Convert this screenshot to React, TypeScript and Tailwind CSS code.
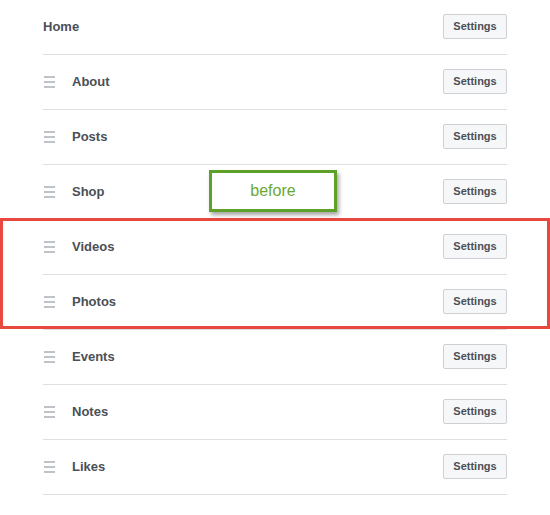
const tabs = ["About", "Posts", "Shop", "Videos", "Photos", "Events", "Notes", "Likes"];

function DragHandle() {
  return (
    <svg width="11" height="12" viewBox="0 0 11 12" className="shrink-0 mr-[17px]">
      <rect x="0" y="0" width="11" height="2" fill="#bec3c9" />
      <rect x="0" y="5" width="11" height="2" fill="#bec3c9" />
      <rect x="0" y="10" width="11" height="2" fill="#bec3c9" />
    </svg>
  );
}

function SettingsButton() {
  return (
    <button className="mb-px h-[25px] w-[64px] rounded-[2px] border border-[#ced0d4] bg-[#f6f7f9] text-[11px] font-bold text-[#4b4f56]">
      Settings
    </button>
  );
}

export default function App() {
  return (
    <div
      className="relative h-[515px] w-[550px] overflow-hidden bg-white"
      style={{ fontFamily: '"Liberation Sans", Arial, sans-serif' }}
    >
      <div className="ml-[43px] w-[464px]">
        <div className="flex h-[55px] items-center justify-between border-b border-[#dddfe2]">
          <span className="text-[13px] font-bold text-[#4b4f56]">Home</span>
          <SettingsButton />
        </div>
        {tabs.map((tab) => (
          <div
            key={tab}
            className="flex h-[55px] items-center justify-between border-b border-[#dddfe2]"
          >
            <div className="flex items-center pl-px">
              <DragHandle />
              <span className="text-[13px] font-bold text-[#4b4f56]">{tab}</span>
            </div>
            <SettingsButton />
          </div>
        ))}
      </div>

      {/* highlight around the moved rows */}
      <div className="absolute left-0 top-[218px] h-[111px] w-[550px] border-[3px] border-[#e8483e]" />

      {/* "before" label */}
      <div className="absolute left-[209px] top-[170px] flex h-[42px] w-[128px] items-center justify-center border-[3px] border-[#5ea129] bg-white shadow-[2px_3px_4px_rgba(0,0,0,0.35)]">
        <span className="text-[16px] text-[#6aa82f]">before</span>
      </div>
    </div>
  );
}
